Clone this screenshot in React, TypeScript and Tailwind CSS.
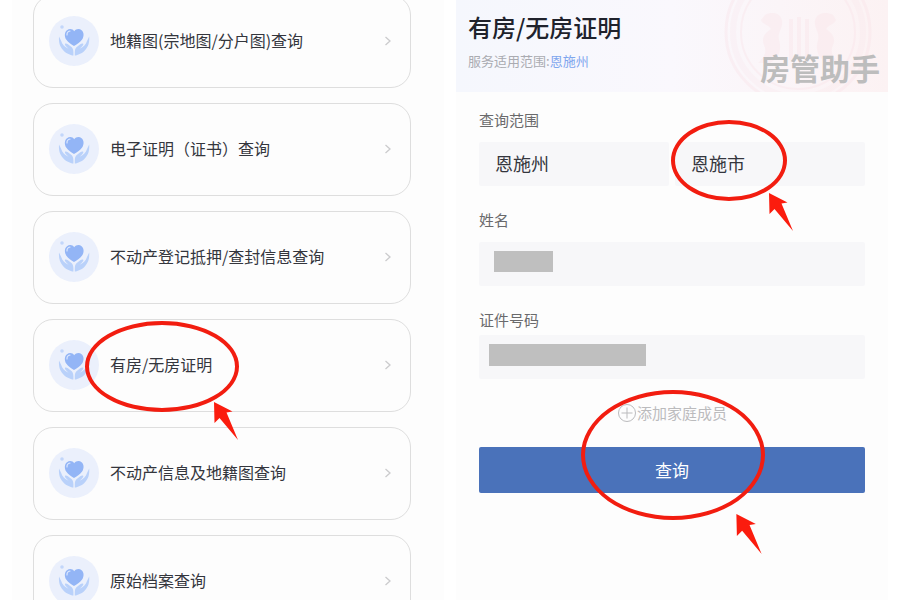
import * as React from "react"
import clsx from "clsx"

const services = [
  { name: "地籍图(宗地图/分户图)查询" },
  { name: "电子证明（证书）查询" },
  { name: "不动产登记抵押/查封信息查询" },
  { name: "有房/无房证明", marked: true },
  { name: "不动产信息及地籍图查询" },
  { name: "原始档案查询" },
]

const CareIcon = () => (
  <svg viewBox="0 0 50 50" className="size-[50px] shrink-0" aria-hidden="true">
    <circle cx="25" cy="25" r="25" fill="#ebf0fc" />
    <circle cx="13" cy="11" r="1.8" fill="#c2d6fa" />
    <path
      d="M25 30 C22.5 28.6 19 26.6 17.2 23.6 C15.2 20.3 15.4 16.2 18 14.2 C20.5 12.3 23.8 13 25.2 15.2 C26.8 13 30.2 12.3 32.6 14.2 C35.1 16.3 35.2 20.3 33.1 23.6 C31.2 26.6 27.6 28.7 25 30 Z"
      fill="#93b5f6"
    />
    <path d="M18 19 C17.9 16.8 19 15.4 21 15" fill="none" stroke="#dbe7fe" strokeWidth="1.2" strokeLinecap="round" />
    <path
      d="M10 20.5 C9.6 27 11 30.5 14 34 C17 37.5 19.8 38 23.2 39.5 L24.4 39.5 L24.4 36 C24.3 33 23.4 31.6 21.5 30.2 C19.4 28.7 17.8 27.2 16.4 27.6 C15.4 28 15.8 29.2 17.2 30.5 L19.5 32.8 C15.6 30.6 13.2 28.4 12.3 25.2 Z"
      fill="#b9d1fa"
    />
    <path
      d="M40.2 20.5 C40.6 27 39.2 30.5 36.2 34 C33.2 37.5 30.4 38 27 39.5 L25.8 39.5 L25.8 36 C25.9 33 26.8 31.6 28.7 30.2 C30.8 28.7 32.4 27.2 33.8 27.6 C34.8 28 34.4 29.2 33 30.5 L30.7 32.8 C34.6 30.6 37 28.4 37.9 25.2 Z"
      fill="#b9d1fa"
    />
  </svg>
)

const Chevron = () => (
  <svg viewBox="0 0 8 10" className="ml-auto h-[10px] w-2 shrink-0" aria-hidden="true">
    <path d="M1.5 1 L6 5 L1.5 9" fill="none" stroke="#cbcbcd" strokeWidth="1.3" />
  </svg>
)

const Emblem = () => (
  <svg viewBox="0 0 150 92" className="absolute inset-y-0 right-4 h-full" aria-hidden="true">
    <g fill="none" stroke="#f9dfe5" opacity="0.3">
      <circle cx="76" cy="32" r="72" strokeWidth="3" />
      <circle cx="76" cy="32" r="65" strokeWidth="6" opacity="0.6" />
      <circle cx="76" cy="32" r="57" strokeWidth="2" />
    </g>
    <g fill="#f9e0e5" opacity="0.3">
      <path d="M43 15 C50 11 59 13 60 21 C61 29 55 32 57 40 C60 50 57 58 48 63 L36 63 C43 57 45 51 42 45 C39 38 43 33 49 29 C46 24 41 25 39 20 Z" />
      <path d="M111 15 C104 11 94 13 93 21 C92 29 98 32 96 40 C93 50 96 58 105 63 L117 63 C110 57 108 51 111 45 C114 38 110 33 104 29 C107 24 112 25 114 20 Z" />
      <path d="M67 19 H71 V60 H67 Z M75 17 H79 V60 H75 Z M83 19 H87 V60 H83 Z" />
    </g>
  </svg>
)

const Ring = ({ className }: { className: string }) => (
  <span className={clsx("pointer-events-none absolute z-10 rounded-[50%] border-4 border-[#f21d10]", className)} />
)

const Arrow = ({ className }: { className: string }) => (
  <svg viewBox="0 0 24 38" className={clsx("pointer-events-none absolute z-10", className)} aria-hidden="true">
    <path d="M0 0 L18.5 9.5 L12.5 10.5 L24 38 L5.5 16 L0.5 21 Z" fill="#fb1c0e" />
  </svg>
)

const ServiceList = () => (
  <section className="bg-[#fdfdfd] pr-[33px] pl-[21px]">
    <ul className="-mt-[5px] flex flex-col gap-[15px]">
      {services.map((service) => (
        <li key={service.name} className="relative">
          <a
            href="#"
            className="flex h-[93px] items-center gap-[11px] rounded-[20px] border border-[#dedede] pr-[18px] pb-[2px] pl-[15px] text-base text-[#34363d]"
          >
            <CareIcon />
            <span className="pb-[2px] whitespace-nowrap">{service.name}</span>
            <Chevron />
          </a>
          {service.marked && (
            <>
              <Ring className="top-[2px] left-[52px] h-[91px] w-[154px]" />
              <Arrow className="top-[83px] left-[181px] h-[38px] w-6" />
            </>
          )}
        </li>
      ))}
    </ul>
  </section>
)

const fieldStyle =
  "h-11 w-full appearance-none rounded-xs bg-[#f7f7f9] px-4 pb-[2px] text-lg text-[#34363d] outline-none"
const maskedFieldStyle = "flex h-11 rounded-xs bg-[#f7f7f9] pt-[9px]"
const labelStyle = "text-[15px] leading-5 text-[#6a6a6c]"

const ProofForm = () => (
  <section className="bg-[#fdfdfd]">
    <header className="relative flex h-[92px] justify-between overflow-hidden bg-linear-to-r from-[#f5f7fd] via-[#faf8fd] to-[#fcf2f3] pt-[11px] pr-2 pl-3">
      <Emblem />
      <div className="flex flex-col gap-2">
        <h1 className="text-2xl font-medium text-[#20222c]">有房/无房证明</h1>
        <p className="text-[13px] leading-5 text-[#aaabb1]">
          服务适用范围:<span className="text-[#7fa6ee]">恩施州</span>
        </p>
      </div>
      <p className="z-10 self-end pb-[2px] text-[30px] leading-[46px] font-bold text-[#bdbdbd]">房管助手</p>
    </header>

    <form className="flex flex-col gap-6 px-[23px] pt-[18px]" onSubmit={(e) => e.preventDefault()}>
      <div className="flex flex-col gap-3">
        <label htmlFor="city" className={labelStyle}>
          查询范围
        </label>
        <div className="grid grid-cols-2 gap-[6px]">
          <select id="city" className={fieldStyle}>
            <option>恩施州</option>
          </select>
          <div className="relative">
            <select aria-label="县市" className={fieldStyle}>
              <option>恩施市</option>
            </select>
            <Ring className="-top-[22px] -left-[4px] h-[81px] w-[116px]" />
            <Arrow className="top-[51px] left-[94px] h-[38px] w-6" />
          </div>
        </div>
      </div>

      <div className="flex flex-col gap-3">
        <label htmlFor="name" className={labelStyle}>
          姓名
        </label>
        <div className={clsx(maskedFieldStyle, "pl-[15px]")}>
          <span className="h-[21px] w-[59px] bg-[#bfbfbf]" />
          <input id="name" type="text" className="h-6 min-w-0 flex-1 bg-transparent outline-none" />
        </div>
      </div>

      <div className="flex flex-col gap-[5px]">
        <label htmlFor="id-number" className={labelStyle}>
          证件号码
        </label>
        <div className={clsx(maskedFieldStyle, "pl-[10px]")}>
          <span className="h-[22px] w-[157px] bg-[#bfbfbf]" />
          <input id="id-number" type="text" className="h-6 min-w-0 flex-1 bg-transparent outline-none" />
        </div>
      </div>

      <div className="relative flex flex-col items-center gap-6">
        <button type="button" className="flex items-center text-[15px] leading-5 text-[#bbbbbd]">
          <svg viewBox="0 0 20 20" className="size-5" fill="none" stroke="currentColor" aria-hidden="true">
            <circle cx="10" cy="10" r="8.5" />
            <path d="M10 4.5 V15.5 M4.5 10 H15.5" />
          </svg>
          添加家庭成员
        </button>
        <button type="submit" className="h-[46px] w-full rounded-xs bg-[#4a72ba] text-[17px] text-white">
          查询
        </button>
        <Ring className="-top-[13px] left-[102px] h-[130px] w-[184px]" />
        <Arrow className="top-[111px] left-[257px] h-[40px] w-[26px]" />
      </div>
    </form>
  </section>
)

const App = () => (
  <main className="grid h-screen grid-cols-2 gap-3 overflow-hidden bg-white px-3 font-['Noto_Sans_CJK_SC',sans-serif]">
    <ServiceList />
    <ProofForm />
  </main>
)

export default App
